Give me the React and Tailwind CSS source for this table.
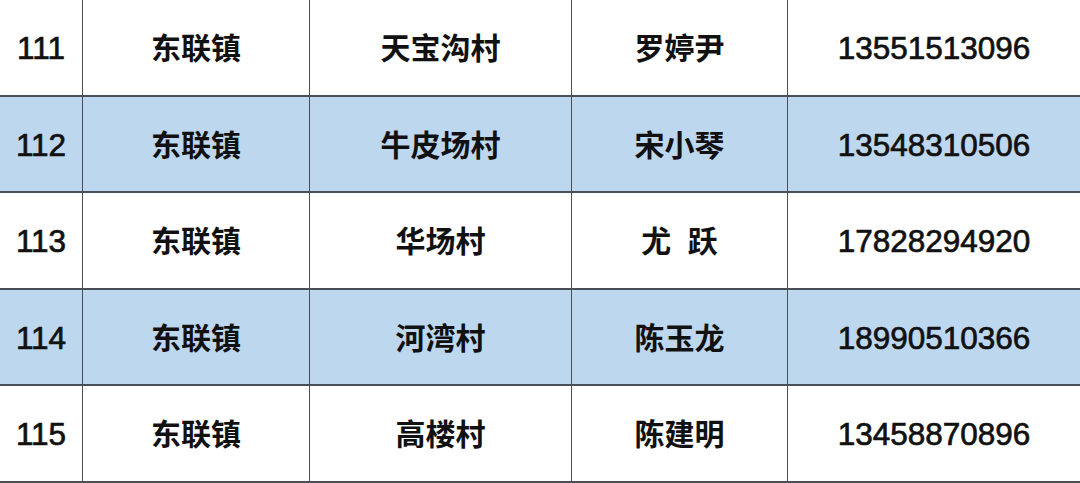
import React from "react";

const rows = [
  ["111", "东联镇", "天宝沟村", "罗婷尹", "13551513096"],
  ["112", "东联镇", "牛皮场村", "宋小琴", "13548310506"],
  ["113", "东联镇", "华场村", "尤  跃", "17828294920"],
  ["114", "东联镇", "河湾村", "陈玉龙", "18990510366"],
  ["115", "东联镇", "高楼村", "陈建明", "13458870896"],
];

const widths = ["w-[83px]", "w-[227px]", "w-[262px]", "w-[216px]", "flex-1"];

export default function App() {
  return (
    <div className="w-[1080px] h-[483px] bg-white overflow-hidden font-['Liberation_Sans','Noto_Sans_CJK_SC',sans-serif]">
      {rows.map((row, i) => (
        <div
          key={row[0]}
          className={`flex h-[96.5px] border-b-2 border-[#4a4f57] ${i % 2 === 1 ? "bg-[#bdd7ee]" : "bg-white"}`}
        >
          {row.map((cell, j) => {
            const isNum = j === 0 || j === 4;
            return (
              <div
                key={j}
                className={`${widths[j]} flex items-center justify-center pt-[3px] text-[#111] whitespace-pre ${
                  isNum
                    ? "text-[31.5px] font-normal [-webkit-text-stroke:0.7px_#111]"
                    : "text-[30px] font-bold"
                } ${j < 4 ? "border-r-[1.5px] border-[#4a4f57]" : ""}`}
              >
                {cell}
              </div>
            );
          })}
        </div>
      ))}
    </div>
  );
}
